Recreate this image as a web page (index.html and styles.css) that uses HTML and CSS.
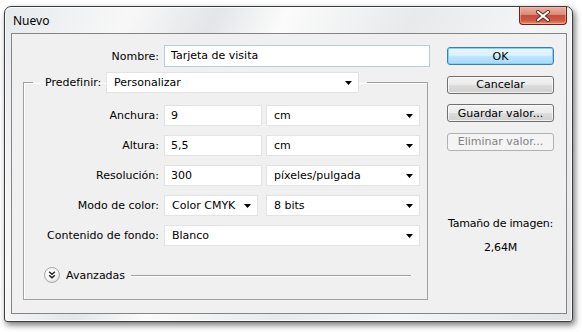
FILE: index.html
```html
<!DOCTYPE html>
<html lang="es">
<head>
    <meta charset="UTF-8">
    <title>Nuevo</title>
    <link rel="stylesheet" href="styles.css">
</head>
<body>
    <div class="window">
        <div class="titlebar">
            <span class="title">Nuevo</span>
            <div class="close">
                <svg width="16" height="12" viewBox="0 0 16 12">
                    <path d="M3 2 L13 10 M13 2 L3 10" stroke="#5a2a22" stroke-width="4" stroke-linecap="round"/>
                    <path d="M3 2 L13 10 M13 2 L3 10" stroke="#ffffff" stroke-width="2.2" stroke-linecap="round"/>
                </svg>
            </div>
        </div>

        <div class="client">
            <div class="form">
                <div class="name-row">
                    <label class="name-label">Nombre:</label>
                    <div class="field name-field">Tarjeta de visita</div>
                </div>

                <fieldset class="group">
                    <legend class="preset">
                        <span class="preset-label">Predefinir:</span>
                        <div class="field select preset-select">Personalizar<svg class="arrow" width="7" height="4" viewBox="0 0 7 4"><path d="M0 0 H7 L3.5 4 Z" fill="#000"/></svg></div>
                    </legend>

                    <div class="rows">
                        <label>Anchura:</label>
                        <div class="field">9</div>
                        <div class="field select">cm<svg class="arrow" width="7" height="4" viewBox="0 0 7 4"><path d="M0 0 H7 L3.5 4 Z" fill="#000"/></svg></div>

                        <label>Altura:</label>
                        <div class="field">5,5</div>
                        <div class="field select">cm<svg class="arrow" width="7" height="4" viewBox="0 0 7 4"><path d="M0 0 H7 L3.5 4 Z" fill="#000"/></svg></div>

                        <label>Resolución:</label>
                        <div class="field">300</div>
                        <div class="field select">píxeles/pulgada<svg class="arrow" width="7" height="4" viewBox="0 0 7 4"><path d="M0 0 H7 L3.5 4 Z" fill="#000"/></svg></div>

                        <label>Modo de color:</label>
                        <div class="field select mode">Color CMYK<svg class="arrow" width="7" height="4" viewBox="0 0 7 4"><path d="M0 0 H7 L3.5 4 Z" fill="#000"/></svg></div>
                        <div class="field select">8 bits<svg class="arrow" width="7" height="4" viewBox="0 0 7 4"><path d="M0 0 H7 L3.5 4 Z" fill="#000"/></svg></div>

                        <label>Contenido de fondo:</label>
                        <div class="field select wide">Blanco<svg class="arrow" width="7" height="4" viewBox="0 0 7 4"><path d="M0 0 H7 L3.5 4 Z" fill="#000"/></svg></div>
                    </div>

                    <div class="advanced">
                        <svg class="toggle" width="16" height="16" viewBox="0 0 16 16">
                            <defs>
                                <radialGradient id="knob" cx="0.4" cy="0.35" r="0.7">
                                    <stop offset="0" stop-color="#ffffff"/>
                                    <stop offset="0.7" stop-color="#f2f2f2"/>
                                    <stop offset="1" stop-color="#d6d6d6"/>
                                </radialGradient>
                            </defs>
                            <circle cx="8" cy="8" r="7.5" fill="url(#knob)" stroke="#a7a7a7"/>
                            <path d="M5.2 4.8 L8 7.4 L10.8 4.8 M5.2 8.2 L8 10.8 L10.8 8.2" fill="none" stroke="#1a1a1a" stroke-width="1.4"/>
                        </svg>
                        <span class="advanced-label">Avanzadas</span>
                        <div class="rule"></div>
                    </div>
                </fieldset>
            </div>

            <div class="side">
                <div class="buttons">
                    <button class="btn default">OK</button>
                    <button class="btn">Cancelar</button>
                    <button class="btn">Guardar valor...</button>
                    <button class="btn" disabled>Eliminar valor...</button>
                </div>
                <div class="size-info">
                    <div>Tamaño de imagen:</div>
                    <div class="size-value">2,64M</div>
                </div>
            </div>
        </div>
    </div>
</body>
</html>
```

FILE: styles.css
```css
body {
    margin: 0;
    width: 582px;
    height: 332px;
    background: #ffffff;
    font-family: "DejaVu Sans", sans-serif;
    font-size: 11px;
    color: #000;
    overflow: hidden;
}

.window {
    box-sizing: border-box;
    width: 569px;
    height: 316px;
    margin: 6px 0 0 4px;
    padding: 0 5px 7px 6px;
    border: 1px solid #3c3c3c;
    border-radius: 7px 7px 3px 3px;
    background: linear-gradient(115deg, #e6e9ec 0%, #f8f8f8 18%, #e3e5e8 30%, #fbfbfb 40%, #e7e9eb 58%, #f4f5f6 75%, #e2e4e6 100%);
    box-shadow: 2px 3px 6px rgba(0, 0, 0, 0.55), inset 0 0 0 1px rgba(255, 255, 255, 0.8);
}

.titlebar {
    display: flex;
    justify-content: space-between;
    align-items: flex-start;
    height: 26px;
}

.title {
    padding: 7px 0 0 2px;
    font-family: "Noto Sans", sans-serif;
    font-size: 12px;
    line-height: 14px;
    color: #000;
}

.close {
    display: flex;
    align-items: center;
    justify-content: center;
    width: 48px;
    height: 18px;
    box-sizing: border-box;
    border: 1px solid #6b2218;
    border-top: none;
    border-radius: 0 0 4px 4px;
    background: linear-gradient(#eab0a2 0%, #dc8a78 45%, #c94c3a 50%, #cf5a42 80%, #e5966f 100%);
    box-shadow: inset 0 0 0 1px rgba(255, 200, 190, 0.45);
}

.client {
    display: flex;
    box-sizing: border-box;
    height: 281px;
    border: 1px solid #858585;
    background: #f0f0f0;
}

.form {
    width: 418px;
    padding-top: 11px;
}

.name-row {
    display: flex;
    align-items: center;
}

.name-label {
    width: 147px;
    margin-right: 5px;
    text-align: right;
}

.field {
    position: relative;
    box-sizing: border-box;
    height: 21px;
    padding-left: 6px;
    border: 1px solid #e2e3e5;
    background: #ffffff;
    line-height: 19px;
    white-space: nowrap;
}

.name-field {
    width: 266px;
    height: 22px;
    line-height: 20px;
    border-color: #b6cde4;
}

.select {
    padding-left: 7px;
}

.arrow {
    position: absolute;
    right: 6px;
    top: 8px;
}

.group {
    box-sizing: border-box;
    width: 405px;
    height: 228px;
    margin: 5px 0 0 11px;
    padding: 0;
    border: 1px solid #a0a0a0;
    box-shadow: inset 1px 1px 0 #ffffff;
}

.preset {
    display: flex;
    align-items: center;
    margin-left: 9px;
    padding: 0 8px 0 12px;
}

.preset-label {
    width: 56px;
    margin-right: 5px;
    text-align: right;
    white-space: nowrap;
}

.preset-select {
    width: 253px;
}

.rows {
    display: grid;
    grid-template-columns: 136px 98px 154px;
    column-gap: 4px;
    row-gap: 9px;
    margin-top: 12px;
}

.rows label {
    padding-right: 1px;
    text-align: right;
    line-height: 21px;
    white-space: nowrap;
}

.mode {
    width: 94px;
}

.wide {
    grid-column: 2 / 4;
}

.advanced {
    display: flex;
    align-items: center;
    margin: 21px 16px 0 20px;
}

.toggle {
    display: block;
}

.advanced-label {
    margin: 0 6px;
}

.rule {
    flex: 1;
    height: 1px;
    background: #a0a0a0;
    box-shadow: 0 1px 0 #ffffff;
}

.side {
    width: 107px;
    margin-left: 17px;
    padding-top: 13px;
}

.buttons {
    display: flex;
    flex-direction: column;
    gap: 10.5px;
}

.btn {
    box-sizing: border-box;
    height: 18px;
    padding: 0;
    border: 1px solid #707070;
    border-radius: 3px;
    background: linear-gradient(#f2f2f2 0%, #ebebeb 50%, #dddddd 51%, #cfcfcf 100%);
    box-shadow: inset 0 0 0 1px rgba(255, 255, 255, 0.7);
    font: inherit;
    color: #000;
    line-height: 15px;
}

.btn.default {
    border-color: #3c7fb1;
    background: linear-gradient(#eaf6fd 0%, #d9f0fc 50%, #bee6fd 51%, #a7d9f5 100%);
    box-shadow: inset 0 0 0 1px #7fd3fb;
}

.btn:disabled {
    border-color: #adb2b5;
    background: #f4f4f4;
    box-shadow: none;
    color: #838383;
}

.size-info {
    display: flex;
    flex-direction: column;
    align-items: center;
    gap: 10px;
    margin-top: 66px;
    line-height: 14px;
    white-space: nowrap;
    letter-spacing: -0.2px;
}
```
